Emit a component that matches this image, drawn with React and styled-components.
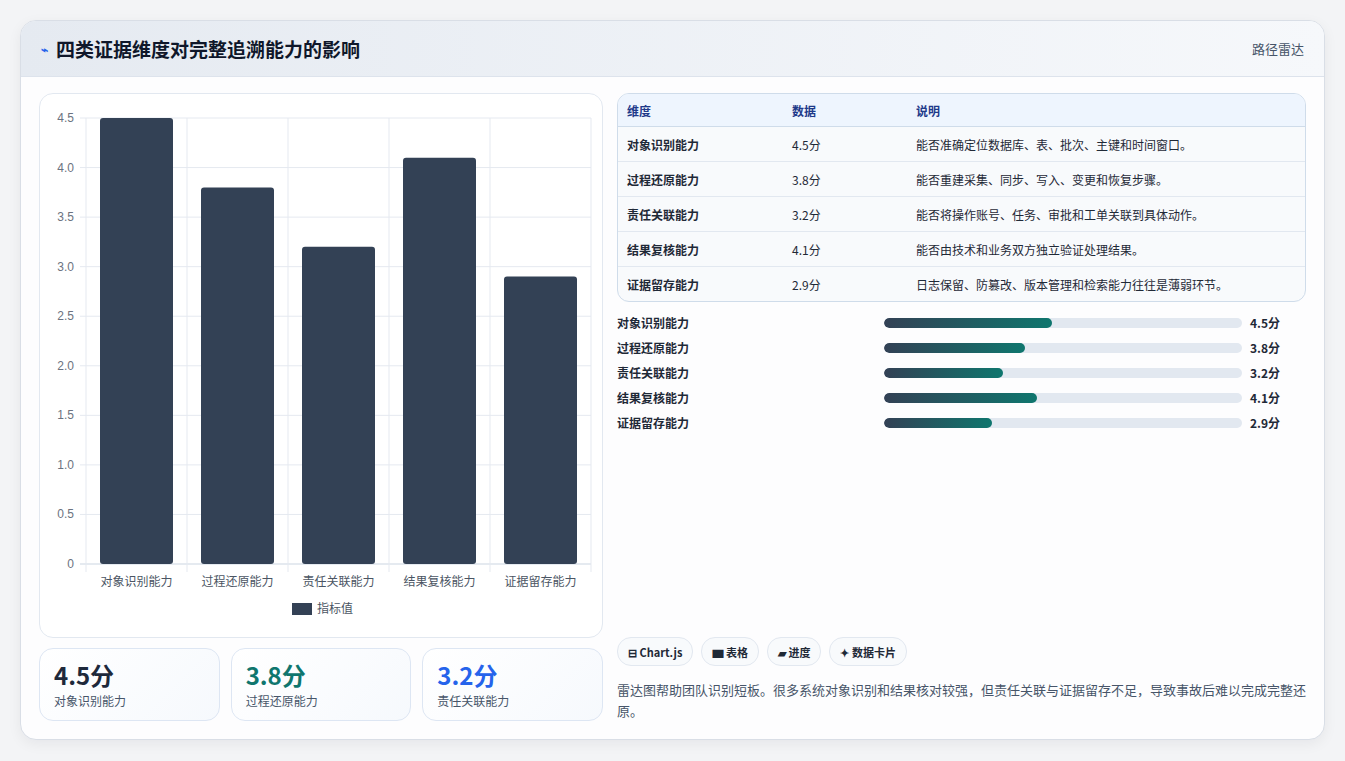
import styled, { createGlobalStyle } from 'styled-components';

const GlobalStyle = createGlobalStyle`
  body { margin: 0; background: #f3f4f6; font-family: "Noto Sans CJK SC", "Noto Sans", sans-serif; }
`;

const data = [
  { name: '对象识别能力', v: 4.5, desc: '能否准确定位数据库、表、批次、主键和时间窗口。' },
  { name: '过程还原能力', v: 3.8, desc: '能否重建采集、同步、写入、变更和恢复步骤。' },
  { name: '责任关联能力', v: 3.2, desc: '能否将操作账号、任务、审批和工单关联到具体动作。' },
  { name: '结果复核能力', v: 4.1, desc: '能否由技术和业务双方独立验证处理结果。' },
  { name: '证据留存能力', v: 2.9, desc: '日志保留、防篡改、版本管理和检索能力往往是薄弱环节。' },
];

const Page = styled.div`
  padding: 20px 20px 21px 20px;
`;
const Card = styled.div`
  height: 718px;
  background: #fdfdfe;
  border: 1px solid #d9dee6;
  border-radius: 16px;
  box-shadow: 0 4px 14px rgba(15, 23, 42, 0.06);
  overflow: hidden;
  display: flex;
  flex-direction: column;
`;
const Header = styled.div`
  height: 55px;
  flex: none;
  display: flex;
  align-items: center;
  justify-content: space-between;
  padding: 0 20px;
  background: linear-gradient(90deg, #e5eaf1, #f6f8fb);
  border-bottom: 1px solid #dde3ec;
`;
const Title = styled.h1`
  margin: 0;
  font-size: 19px;
  font-weight: 700;
  color: #0f172a;
  display: flex;
  align-items: center;
  gap: 8px;
`;
const Spark = styled.span`
  color: #2563eb;
  font-size: 12px;
`;
const Tag = styled.span`
  font-size: 13px;
  color: #475569;
`;
const Body = styled.div`
  flex: 1;
  display: grid;
  grid-template-columns: 564px 1fr;
  gap: 14px;
  padding: 16px 18px 18px 18px;
`;
const Col = styled.div`
  display: flex;
  flex-direction: column;
  gap: 10px;
  min-height: 0;
`;
const ChartCard = styled.div`
  height: 543px;
  background: #fff;
  border: 1px solid #e2e8f0;
  border-radius: 14px;
`;
const Stats = styled.div`
  display: grid;
  grid-template-columns: repeat(3, 1fr);
  gap: 11px;
`;
const Stat = styled.div`
  height: 73px;
  box-sizing: border-box;
  border: 1px solid #dde6f3;
  border-radius: 14px;
  background: linear-gradient(135deg, #ffffff, #f6f9fd);
  padding: 11px 14px;
`;
const StatValue = styled.div`
  font-size: 24px;
  font-weight: 700;
  line-height: 30px;
  color: ${p => p.$color};
`;
const StatLabel = styled.div`
  font-size: 12px;
  color: #475569;
  margin-top: 2px;
`;
const Table = styled.table`
  width: 100%;
  border-collapse: separate;
  border-spacing: 0;
  border: 1px solid #cfdcea;
  border-radius: 12px;
  overflow: hidden;
  font-size: 12px;
  background: #f8fafc;
  & th {
    text-align: left;
    font-weight: 700;
    color: #1e3a8a;
    background: #eef5fe;
    height: 32px;
    padding: 0 9px;
    border-bottom: 1px solid #cfdcea;
  }
  & td {
    height: 34px;
    padding: 0 9px;
    color: #1f2937;
    border-bottom: 1px solid #e2e8f0;
  }
  & tr:last-child td { border-bottom: none; }
  & td:first-child { font-weight: 600; }
`;
const Bars = styled.div`
  display: flex;
  flex-direction: column;
  gap: 9px;
  margin-top: 2px;
`;
const BarRow = styled.div`
  display: grid;
  grid-template-columns: 259px 358px 1fr;
  gap: 8px;
  align-items: center;
  font-size: 12px;
  color: #1f2937;
  font-weight: 600;
  height: 16px;
`;
const Track = styled.div`
  height: 10px;
  border-radius: 5px;
  background: #e2e8f0;
  overflow: hidden;
`;
const Fill = styled.div`
  height: 100%;
  border-radius: 5px;
  background: linear-gradient(90deg, #334155, #0f766e);
`;
const Footer = styled.div`
  margin-top: auto;
`;
const Chips = styled.div`
  display: flex;
  gap: 8px;
  margin-bottom: 13px;
`;
const Chip = styled.span`
  height: 27px;
  display: inline-flex;
  align-items: center;
  gap: 4px;
  padding: 0 10px;
  border: 1px solid #e2e8f0;
  border-radius: 14px;
  background: #f8fafc;
  font-size: 11px;
  font-weight: 600;
  color: #1f2937;
`;
const Note = styled.p`
  margin: 0;
  font-size: 13px;
  line-height: 21px;
  color: #475569;
`;

function Chart() {
  const L = 46, R = 551, T = 24, B = 470;
  const h = B - T;
  const cw = (R - L) / 5;
  const ticks = [0, 0.5, 1, 1.5, 2, 2.5, 3, 3.5, 4, 4.5];
  const y = v => B - (v / 4.5) * h;
  return (
    <svg width="564" height="543" style={{ display: 'block' }} fontFamily="'Liberation Sans', 'Noto Sans CJK SC', sans-serif">
      {ticks.map(t => (
        <g key={t}>
          <line x1={L - 6} x2={R} y1={y(t)} y2={y(t)} stroke={t === 0 ? '#cbd5e1' : '#e5e9f0'} />
          <text x={L - 12} y={y(t) + 4} textAnchor="end" fontSize="12" fill="#6b7280">{t === 0 ? '0' : t.toFixed(1)}</text>
        </g>
      ))}
      {[0, 1, 2, 3, 4, 5].map(i => (
        <line key={i} x1={L + i * cw} x2={L + i * cw} y1={T} y2={B + 8} stroke="#e5e9f0" />
      ))}
      {data.map((d, i) => (
        <g key={d.name}>
          <rect x={L + i * cw + 14} y={y(d.v)} width={73} height={B - y(d.v)} rx="3" fill="#334155" />
          <text x={L + i * cw + cw / 2} y={B + 22} textAnchor="middle" fontSize="12" fill="#4b5563">{d.name}</text>
        </g>
      ))}
      <rect x={252} y={509} width={20} height={12} fill="#334155" />
      <text x={277} y={519} fontSize="12" fill="#4b5563">指标值</text>
    </svg>
  );
}

export default function App() {
  return (
    <Page>
      <GlobalStyle />
      <Card>
        <Header>
          <Title><Spark>⌁</Spark>四类证据维度对完整追溯能力的影响</Title>
          <Tag>路径雷达</Tag>
        </Header>
        <Body>
          <Col>
            <ChartCard><Chart /></ChartCard>
            <Stats>
              <Stat><StatValue $color="#1e293b">4.5分</StatValue><StatLabel>对象识别能力</StatLabel></Stat>
              <Stat><StatValue $color="#0f766e">3.8分</StatValue><StatLabel>过程还原能力</StatLabel></Stat>
              <Stat><StatValue $color="#2563eb">3.2分</StatValue><StatLabel>责任关联能力</StatLabel></Stat>
            </Stats>
          </Col>
          <Col>
            <Table>
              <thead>
                <tr><th style={{ width: 147 }}>维度</th><th style={{ width: 106 }}>数据</th><th>说明</th></tr>
              </thead>
              <tbody>
                {data.map(d => (
                  <tr key={d.name}><td>{d.name}</td><td>{d.v}分</td><td>{d.desc}</td></tr>
                ))}
              </tbody>
            </Table>
            <Bars>
              {data.map(d => (
                <BarRow key={d.name}>
                  <span>{d.name}</span>
                  <Track><Fill style={{ width: `${d.v * 10.4}%` }} /></Track>
                  <span>{d.v}分</span>
                </BarRow>
              ))}
            </Bars>
            <Footer>
              <Chips>
                <Chip>⊟ Chart.js</Chip>
                <Chip>▆ 表格</Chip>
                <Chip>▰ 进度</Chip>
                <Chip>✦ 数据卡片</Chip>
              </Chips>
              <Note>雷达图帮助团队识别短板。很多系统对象识别和结果核对较强，但责任关联与证据留存不足，导致事故后难以完成完整还原。</Note>
            </Footer>
          </Col>
        </Body>
      </Card>
    </Page>
  );
}
